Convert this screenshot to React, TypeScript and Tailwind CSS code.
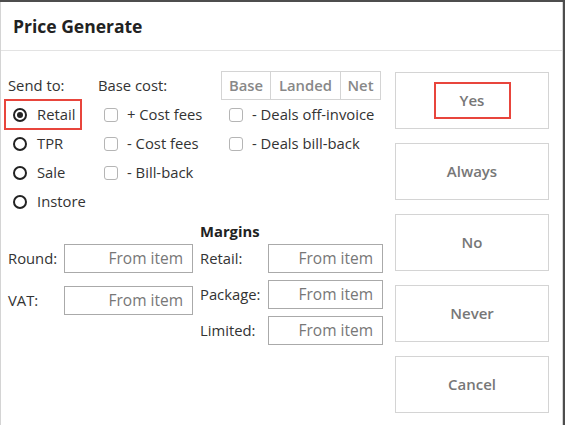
import React from 'react';

const font = { fontFamily: '"Open Sans", "Liberation Sans", sans-serif' };

function Radio({ label, checked }: { label: string; checked?: boolean }) {
  return (
    <div className="flex items-center h-[29px]">
      <span className="w-[14px] h-[14px] rounded-full border-2 border-[#222] flex items-center justify-center shrink-0">
        {checked && <span className="w-[6px] h-[6px] rounded-full bg-[#222]" />}
      </span>
      <span className="ml-[10px]">{label}</span>
    </div>
  );
}

function Check({ label }: { label: string }) {
  return (
    <div className="flex items-center h-[29px]">
      <span className="w-[14px] h-[14px] rounded-[3px] border-[1.5px] border-[#b5b5b5] shrink-0" />
      <span className="ml-[9px] whitespace-nowrap">{label}</span>
    </div>
  );
}

function Field({ className }: { className: string }) {
  return (
    <div
      className={`h-[29px] border border-[#aaa] flex items-center justify-end pr-[9px] text-[15.5px] text-[#777] ${className}`}
    >
      From item
    </div>
  );
}

const buttons = ['Yes', 'Always', 'No', 'Never', 'Cancel'];

export default function App() {
  return (
    <div className="w-[565px] h-[425px] bg-[#4d4d4d] pt-[2px] overflow-hidden" style={font}>
      <div className="w-[563px] h-[423px] bg-white border-l border-r border-[#d4d4d4] flex flex-col text-[14.8px] text-[#333]">
        <div className="h-[49px] border-b border-[#e3e3e3] flex items-center pl-3 pt-[1px]">
          <h1 className="text-[17.5px] font-bold text-[#222]">Price Generate</h1>
        </div>
        <div className="flex flex-1">
          <div className="flex-1 pl-[7px] pt-[20px]">
            <div className="flex">
              <div className="w-[90px]">
                <div className="h-[29px] flex items-center">Send to:</div>
                <div className="-ml-[4px] -my-[1px] w-[78px] h-[31px] border-2 border-[#e8453c] pl-[7px] flex items-center">
                  <Radio label="Retail" checked />
                </div>
                <div className="pl-[5px]">
                  <Radio label="TPR" />
                  <Radio label="Sale" />
                  <Radio label="Instore" />
                </div>
              </div>
              <div className="w-[123px]">
                <div className="h-[29px] flex items-center">Base cost:</div>
                <div className="pl-[6px]">
                  <Check label="+ Cost fees" />
                  <Check label="- Cost fees" />
                  <Check label="- Bill-back" />
                </div>
              </div>
              <div>
                <div className="flex h-[29px] border border-[#d4d4d4] text-[#888] font-semibold w-[160px]">
                  <div className="w-[49px] flex items-center justify-center border-r border-[#d4d4d4]">Base</div>
                  <div className="w-[70px] flex items-center justify-center border-r border-[#d4d4d4]">Landed</div>
                  <div className="flex-1 flex items-center justify-center">Net</div>
                </div>
                <div className="pl-[8px]">
                  <Check label="- Deals off-invoice" />
                  <Check label="- Deals bill-back" />
                </div>
              </div>
            </div>
            <div className="flex mt-[3px]">
              <div className="w-[186px] pt-[25px] flex flex-col gap-[13px]">
                <div className="flex items-center">
                  <span className="w-[56px]">Round:</span>
                  <Field className="w-[129px]" />
                </div>
                <div className="flex items-center">
                  <span className="w-[56px]">VAT:</span>
                  <Field className="w-[129px]" />
                </div>
              </div>
              <div className="ml-[6px]">
                <div className="h-[25px] flex items-center font-bold text-[#222]">Margins</div>
                <div className="flex flex-col gap-[7px]">
                  {['Retail:', 'Package:', 'Limited:'].map((l) => (
                    <div key={l} className="flex items-center">
                      <span className="w-[68px]">{l}</span>
                      <Field className="w-[115px]" />
                    </div>
                  ))}
                </div>
              </div>
            </div>
          </div>
          <div className="w-[154px] mr-[13px] pt-[21px] flex flex-col gap-[14px]">
            {buttons.map((b) => (
              <div
                key={b}
                className="h-[57px] border border-[#d4d4d4] flex items-center justify-center text-[15px] font-semibold text-[#777]"
              >
                {b === 'Yes' ? (
                  <div className="w-[77px] h-[37px] border-2 border-[#e8453c] flex items-center justify-center">
                    Yes
                  </div>
                ) : (
                  b
                )}
              </div>
            ))}
          </div>
        </div>
      </div>
    </div>
  );
}
